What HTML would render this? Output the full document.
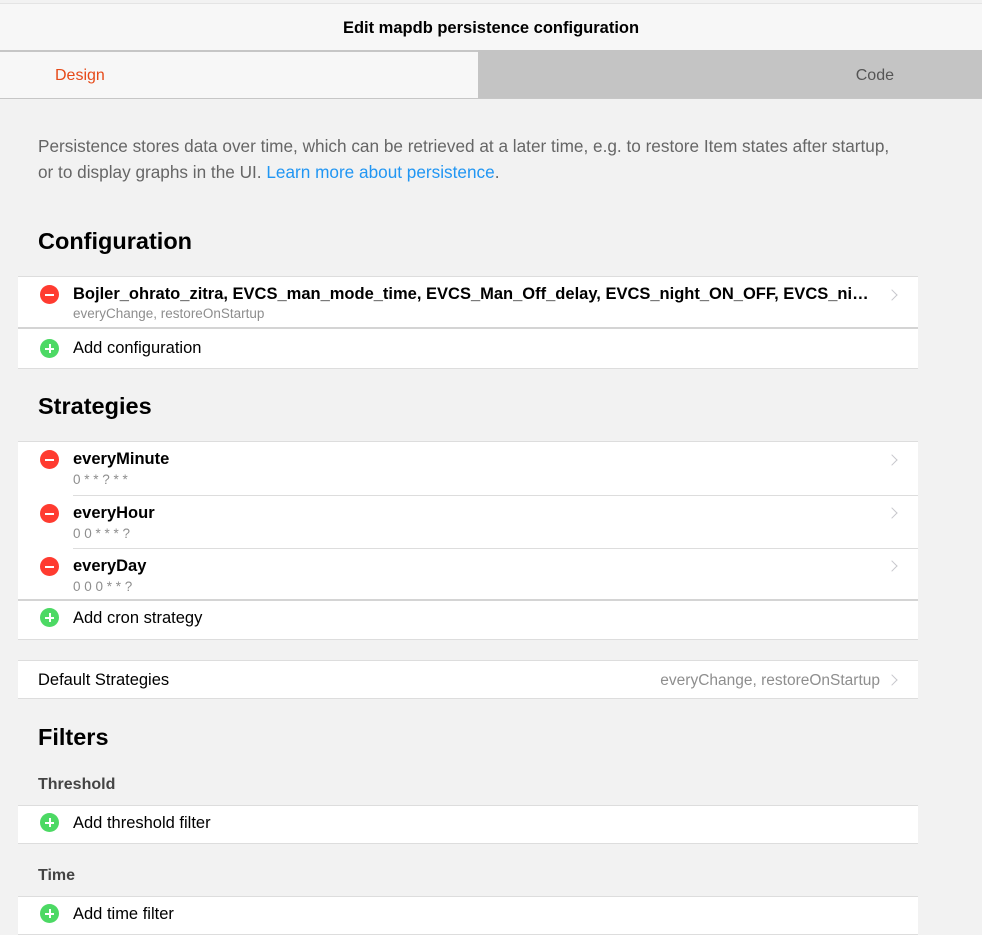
<!DOCTYPE html>
<html><head><meta charset="utf-8"><style>
*{margin:0;padding:0;box-sizing:border-box}
body{width:982px;height:917px;overflow:hidden;background:#f2f2f2;font-family:"Liberation Sans",sans-serif;color:#000;position:relative}
.hdr{position:absolute;top:3px;left:0;width:982px;height:47px;background:#f7f7f7;border-top:1px solid #e4e4e4;text-align:center;font-weight:bold;font-size:16.5px;line-height:48px}
.tabs{position:absolute;top:50px;left:0;width:982px;height:49px;background:#f7f7f7;border-top:2px solid #c6c6c6;border-bottom:1px solid #c6c6c6}
.tab1{position:absolute;left:55px;top:15px;color:#e64a19;font-size:16px}
.tab2{position:absolute;left:478px;top:-2px;width:504px;height:48px;background:#c4c4c4}
.tab2 span{position:absolute;right:88px;top:17px;color:#555;font-size:16px}
.p{position:absolute;left:38px;top:133px;width:868px;font-size:17.2px;line-height:26px;color:#666}
.p a{color:#2196f3;text-decoration:none}
h2{position:absolute;left:38px;font-size:23.5px;font-weight:bold}
h3{position:absolute;left:38px;font-size:16px;font-weight:bold;color:#444}
.list{position:absolute;left:18px;width:900px;background:#fff;border-top:1px solid #ddd;border-bottom:1px solid #ddd}
.row{position:relative;border-bottom:1px solid #ddd}
.row.last{border-bottom:none}
.row.sep::after{content:"";position:absolute;left:55px;right:0;bottom:-1px;height:1px;background:#ddd}
.ic{position:absolute;left:22px;width:19px;height:19px;border-radius:50%}
.rm{background:#ff3b30}.rm::after{content:"";position:absolute;left:5px;top:8.5px;width:9px;height:2px;background:#fff}
.ad{background:#4cd964}.ad::after{content:"";position:absolute;left:5px;top:8.5px;width:9px;height:2px;background:#fff}
.ad::before{content:"";position:absolute;left:8.5px;top:5px;width:2px;height:9px;background:#fff}
.t{position:absolute;left:55px;font-size:16.5px}
.b{font-weight:bold}
.s{position:absolute;left:55px;font-size:13.5px;color:#8e8e8e}
.ch{position:absolute;right:22px;width:8px;height:8px;border-right:1.5px solid #c7c7cc;border-top:1.5px solid #c7c7cc;transform:rotate(45deg)}
</style></head><body>
<div class="hdr">Edit mapdb persistence configuration</div>
<div class="tabs"><span class="tab1">Design</span><div class="tab2"><span>Code</span></div></div>
<div class="p">Persistence stores data over time, which can be retrieved at a later time, e.g. to restore Item states after startup, or to display graphs in the UI. <a>Learn more about persistence</a>.</div>
<h2 style="top:228px">Configuration</h2>
<div class="list" style="top:276px">
 <div class="row" style="height:52px;border-bottom:2px solid #d4d4d4"><div class="ic rm" style="top:8px"></div><div class="t b" style="top:8px;width:800px;white-space:nowrap;overflow:hidden;text-overflow:ellipsis">Bojler_ohrato_zitra, EVCS_man_mode_time, EVCS_Man_Off_delay, EVCS_night_ON_OFF, EVCS_night_OFF_delay</div><div class="s" style="top:29px">everyChange, restoreOnStartup</div><div class="ch" style="top:14px"></div></div>
 <div class="row last" style="height:39px"><div class="ic ad" style="top:10px"></div><div class="t" style="top:10px">Add configuration</div></div>
</div>
<h2 style="top:393px">Strategies</h2>
<div class="list" style="top:441px">
 <div class="row sep" style="height:53px;border:none"><div class="ic rm" style="top:8px"></div><div class="t b" style="top:8px">everyMinute</div><div class="s" style="top:30px">0 * * ? * *</div><div class="ch" style="top:14px"></div></div>
 <div class="row sep" style="height:53px;border:none"><div class="ic rm" style="top:9px"></div><div class="t b" style="top:9px">everyHour</div><div class="s" style="top:31px">0 0 * * * ?</div><div class="ch" style="top:14px"></div></div>
 <div class="row" style="height:53px;border-bottom:2px solid #d4d4d4"><div class="ic rm" style="top:9px"></div><div class="t b" style="top:9px">everyDay</div><div class="s" style="top:31px">0 0 0 * * ?</div><div class="ch" style="top:14px"></div></div>
 <div class="row last" style="height:38px"><div class="ic ad" style="top:7px"></div><div class="t" style="top:8px">Add cron strategy</div></div>
</div>
<div class="list" style="top:660px;height:39px"><div class="t" style="left:20px;top:10px">Default Strategies</div><div style="position:absolute;right:38px;top:11px;font-size:15.5px;color:#8e8e8e">everyChange, restoreOnStartup</div><div class="ch" style="top:15px"></div></div>
<h2 style="top:724px">Filters</h2>
<h3 style="top:776px">Threshold</h3>
<div class="list" style="top:805px;height:39px"><div class="ic ad" style="top:7px"></div><div class="t" style="top:8px">Add threshold filter</div></div>
<h3 style="top:867px">Time</h3>
<div class="list" style="top:896px;height:39px"><div class="ic ad" style="top:7px"></div><div class="t" style="top:8px">Add time filter</div></div>
</body></html>
